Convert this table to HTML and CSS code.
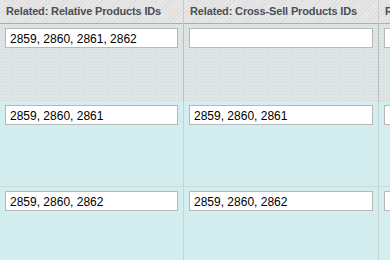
FILE: index.html
```html
<!DOCTYPE html>
<html>
<head>
<meta charset="utf-8">
<link rel="stylesheet" href="styles.css">
</head>
<body>
<div class="grid">
  <div class="hcell">Related: Relative Products IDs</div>
  <div class="hcell">Related: Cross-Sell Products IDs</div>
  <div class="hcell">Related: Up-Sell Products IDs</div>

  <div class="cell r1"><input class="field" value="2859, 2860, 2861, 2862"></div>
  <div class="cell r1"><input class="field" value=""></div>
  <div class="cell r1"><input class="field" value=""></div>

  <div class="cell r2"><input class="field" value="2859, 2860, 2861"></div>
  <div class="cell r2"><input class="field" value="2859, 2860, 2861"></div>
  <div class="cell r2"><input class="field" value=""></div>

  <div class="cell r3"><input class="field" value="2859, 2860, 2862"></div>
  <div class="cell r3"><input class="field" value="2859, 2860, 2862"></div>
  <div class="cell r3"><input class="field" value=""></div>
</div>
</body>
</html>
```
FILE: styles.css
```css
html, body {
  margin: 0;
  padding: 0;
  overflow: hidden;
  background: #d4edee;
}
.grid {
  display: grid;
  grid-template-columns: 184px 195px 200px;
  grid-template-rows: 24px 78px 85px 90px;
  width: 579px;
  font-family: "Liberation Sans", Arial, sans-serif;
}
.hcell {
  box-sizing: border-box;
  border-right: 1px solid #c9cccc;
  border-bottom: 1px solid #a9b0b0;
  padding: 5px 0 0 6px;
  font-size: 11px;
  font-weight: bold;
  letter-spacing: -0.15px;
  color: #4a4f55;
  white-space: nowrap;
  overflow: hidden;
  background: repeating-linear-gradient(135deg, #dddddd 0 1px, #e7e7e7 1px 3px);
}
.cell {
  box-sizing: border-box;
  border-right: 1px solid #c9d2d2;
  padding: 4px 5px 0 5px;
}
.r1 {
  background-color: #dfe4e4;
  background-image: radial-gradient(circle, #d3d9d9 0.6px, transparent 0.9px);
  background-size: 3px 3px;
  border-right-color: #b9c0c0;
}
.r2 {
  background: #d4edee;
  border-bottom: 1px solid #c9dcdd;
  padding-top: 3px;
}
.r3 {
  background: #d4edee;
}
.field {
  box-sizing: border-box;
  display: block;
  width: 100%;
  height: 20px;
  margin: 0;
  border: 1px solid #b5b9b9;
  background: #fff;
  padding: 1px 4px 0 4px;
  font-family: "Liberation Sans", Arial, sans-serif;
  font-size: 12px;
  color: #000;
  outline: none;
}
```
